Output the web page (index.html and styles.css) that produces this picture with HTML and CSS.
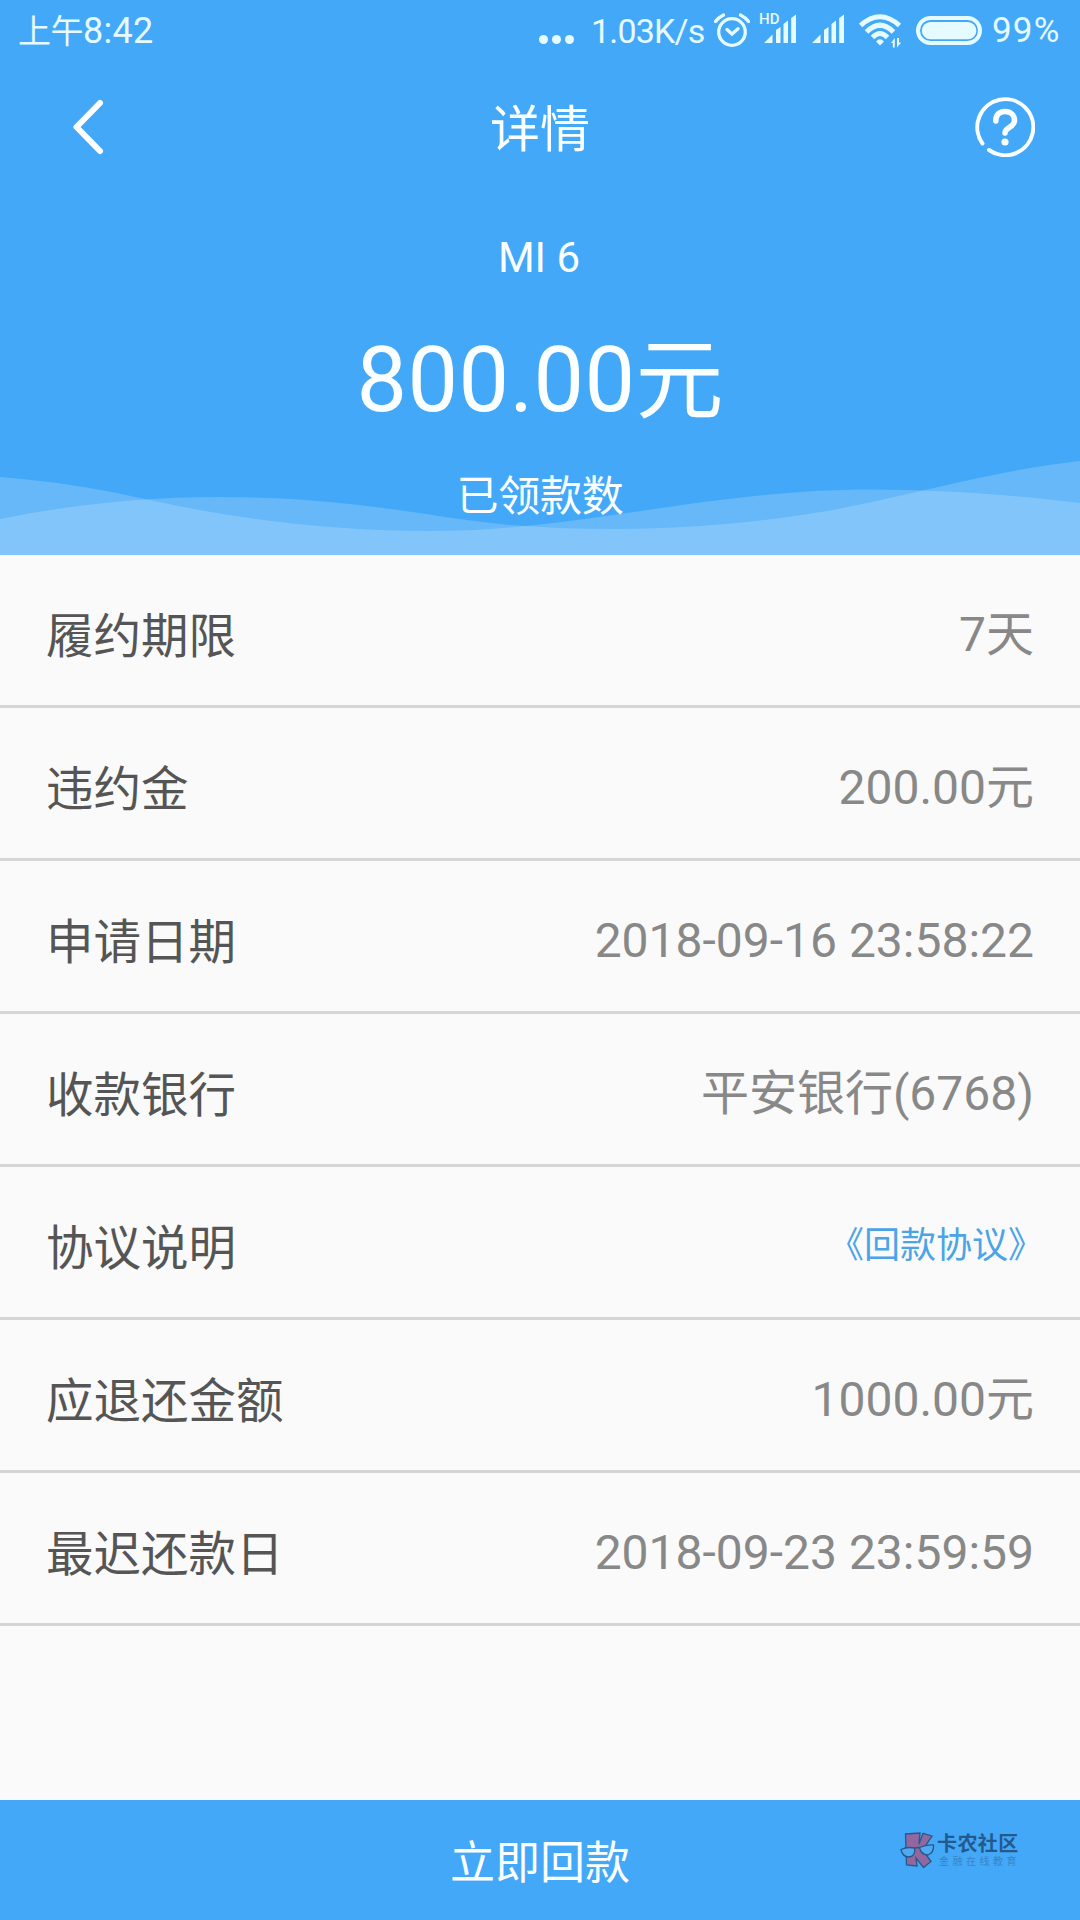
FILE: index.html
```html
<!DOCTYPE html>
<html lang="zh-CN">
<head>
<meta charset="utf-8">
<title>详情</title>
<link rel="stylesheet" href="styles.css">
</head>
<body>
<div class="screen">
  <header class="hero">
    <svg class="waves" width="1080" height="105" viewBox="0 450 1080 105">
      <path d="M0 477C60 482 100 489 145 499C235 519 330 531 430 531C580 531 710 489.500 870 489.500C950 489.500 1020 496 1080 503V555H0Z"/>
      <path d="M0 519C70 505 140 497 220 497C350 497 430 517 500 524C540 528 580 529 619 529C700 529 790 519 850 506.500C930 490 1000 470 1080 461V555H0Z"/>
    </svg>

    <div class="status">
      <div class="clock"><span class="clock-cn">上午</span>8:42</div>
      <div class="indicators">
        <svg class="dots" width="30" height="60" viewBox="539 0 30 60"><circle cx="543.500" cy="39.500" r="4.500"/><circle cx="556.500" cy="39.500" r="4.500"/><circle cx="569.500" cy="39.500" r="4.500"/></svg>
        <span class="speed">1.03K/s</span>
        <svg class="alarm" width="36" height="60" viewBox="714 0 36 60">
          <circle cx="732" cy="32" r="13.300"/>
          <path d="M727 29.500L732 34L738 28.700M715.500 21.500Q718.500 17.500 723.500 15M740.500 15Q745.500 17.500 748.500 21.500"/>
        </svg>
        <div class="sim">
          <span class="hd">HD</span>
          <svg class="bars" width="32" height="60" viewBox="764 0 32 60"><path d="M764 43L772.500 34.500V43ZM776 43V30L780.500 27V43ZM783.500 43V24L788 20.500V43ZM791.200 43V18L796 14.500V43Z"/></svg>
        </div>
        <svg class="bars second" width="32" height="60" viewBox="764 0 32 60"><path d="M764 43L772.500 34.500V43ZM776 43V30L780.500 27V43ZM783.500 43V24L788 20.500V43ZM791.200 43V18L796 14.500V43Z"/></svg>
        <svg class="wifi" width="44" height="60" viewBox="859 0 44 60">
          <path class="arc" d="M860.500 25.500Q880 8 899.500 25.500M866.500 32Q880 18.500 893.500 32M872.500 37.500Q880 29.500 887.500 37.500"/>
          <path d="M876 41.500Q880 37 884 41.500L880 45.500ZM891 43L894.800 38V47.500H892.800V43ZM897 38H899V42.500H901.200L897 47.500Z"/>
        </svg>
        <svg class="battery" width="66" height="60" viewBox="916 0 66 60"><rect class="shell" x="918" y="18" width="62" height="25" rx="12.500"/><rect x="921.800" y="22" width="54.600" height="17.300" rx="8.600"/></svg>
        <span class="percent">99%</span>
      </div>
    </div>

    <nav class="nav">
      <svg class="back" width="40" height="60" viewBox="70 98 40 60"><path d="M101 104L77.500 128L101 152"/></svg>
      <h1 class="title">详情</h1>
      <svg class="help" width="60" height="60" viewBox="975 97 60 60">
        <path class="ring" d="M982.500 143.500A28 28 0 1 1 989 150"/>
        <path class="mark" d="M995.800 121C995.800 114.500 999.500 111.500 1005 111.500C1010.500 111.500 1014.500 115 1014.500 120.500C1014.500 127.500 1005 127 1005 133"/>
        <circle cx="1005" cy="142" r="3.600"/>
      </svg>
    </nav>

    <div class="summary">
      <div class="device">MI 6</div>
      <div class="amount">800.00<span class="unit">元</span></div>
      <div class="caption">已领款数</div>
    </div>
  </header>

  <main class="list">
    <div class="row"><span class="label">履约期限</span><span class="value">7天</span></div>
    <div class="row"><span class="label">违约金</span><span class="value">200.00元</span></div>
    <div class="row"><span class="label">申请日期</span><span class="value">2018-09-16 23:58:22</span></div>
    <div class="row"><span class="label">收款银行</span><span class="value">平安银行(6768)</span></div>
    <div class="row"><span class="label">协议说明</span><a class="link">《回款协议》</a></div>
    <div class="row"><span class="label">应退还金额</span><span class="value">1000.00元</span></div>
    <div class="row"><span class="label">最迟还款日</span><span class="value">2018-09-23 23:59:59</span></div>
  </main>

  <footer class="action">
    <span class="action-text">立即回款</span>
    <div class="watermark">
      <svg width="35" height="37" viewBox="900 1832 35 37">
        <path class="k" d="M905.500 1834L920 1833L919 1844L923 1833.300L932 1836L922.700 1850L931 1861.500L923.500 1867.500L916 1858L917 1866L906.500 1865Z"/>
        <path class="lens" d="M901 1849.500Q907 1846.500 914.500 1848Q916 1856 909 1857Q902.500 1857 901 1849.500ZM919.500 1847.500Q926 1844.500 933.500 1845Q934 1853 928 1855Q921 1855 919.500 1847.500ZM914.500 1848L919.500 1847.500"/>
      </svg>
      <div class="brand"><span class="brand-name">卡农社区</span><span class="brand-sub">金融在线教育</span></div>
    </div>
  </footer>
</div>
</body>
</html>
```
FILE: styles.css
```css
* { box-sizing: border-box; }
body {
  margin: 0;
  font-family: Roboto, "Noto Sans CJK SC", sans-serif;
  background: #fafafa;
}
svg { display: block; flex: none; }
.screen {
  width: 1080px;
  height: 1920px;
  display: flex;
  flex-direction: column;
  background: #fafafa;
  overflow: hidden;
}

.hero {
  position: relative;
  height: 555px;
  flex: none;
  background: #43a8f8;
  color: #fbffff;
}
.waves {
  position: absolute;
  left: 0;
  bottom: 0;
  fill: #fff;
  fill-opacity: .19;
}

.status {
  position: relative;
  height: 60px;
  display: flex;
  justify-content: space-between;
  padding: 0 18px;
  color: #e6fbff;
  fill: #e6fbff;
  line-height: 62px;
  white-space: nowrap;
}
.clock { font-size: 36px; letter-spacing: .3px; }
.clock-cn { font-size: 33px; letter-spacing: -.5px; }
.indicators { display: flex; font-size: 34px; }
.dots { overflow: visible; margin-right: 22px; }
.speed { width: 115px; letter-spacing: -.8px; margin-right: 8px; }
.alarm { fill: none; stroke: #e6fbff; stroke-width: 3.300; stroke-linecap: round; }
.sim { position: relative; margin-left: 14px; }
.hd {
  position: absolute;
  left: -5px;
  top: 9px;
  font-size: 15px;
  line-height: 20px;
  font-weight: 500;
}
.second { margin-left: 16px; }
.wifi { margin-left: 15px; }
.arc { fill: none; stroke: #e6fbff; stroke-width: 5; }
.battery { margin-left: 13px; }
.shell { fill: none; stroke: #e6fbff; stroke-width: 4; }
.percent { margin-left: 10px; width: 70px; font-size: 35px; letter-spacing: 1.200px; }

.nav {
  height: 135px;
  display: flex;
  align-items: center;
  justify-content: space-between;
  padding: 0 45px 2px 69px;
}
.back { fill: none; stroke: #fff; stroke-width: 6; stroke-linecap: round; stroke-linejoin: round; }
.title { margin: 0 4px 0 0; font-size: 50px; font-weight: 400; line-height: 60px; padding-top: 7px; }
.help { fill: #fbffff; }
.ring, .mark { fill: none; stroke: #fbffff; stroke-linecap: round; }
.ring { stroke-width: 4; }
.mark { stroke-width: 5.500; }

.summary {
  position: relative;
  display: flex;
  flex-direction: column;
  align-items: center;
}
.device { font-size: 42px; line-height: 50px; margin-top: 38px; padding-right: 2px; }
.amount { font-size: 90px; line-height: 106px; margin-top: 45px; letter-spacing: .4px; }
.unit { font-size: 88px; letter-spacing: 0; }
.caption { font-size: 42px; line-height: 50px; margin-top: 38px; letter-spacing: -.3px; }

.row {
  height: 153px;
  padding: 10px 46px 0;
  border-bottom: 3px solid #d5d5d5;
  display: flex;
  align-items: center;
  justify-content: space-between;
  font-size: 48px;
  line-height: 60px;
}
.label { color: #555; font-size: 47.500px; padding-top: 4px; }
.value { color: #888; }
.link { color: #4ba4e8; font-size: 36px; margin: 0 -10px 3px 0; }

.action {
  position: relative;
  height: 120px;
  flex: none;
  margin-top: auto;
  display: flex;
  align-items: center;
  justify-content: center;
  padding-top: 7px;
  background: #43a8f8;
  color: #fbffff;
  font-size: 45px;
  line-height: 60px;
}
.watermark {
  position: absolute;
  left: 900px;
  top: 32px;
  display: flex;
}
.k { fill: #92669f; stroke: #24598a; stroke-width: 1.300; }
.lens { fill: #50aaf0; stroke: #24598a; stroke-width: 1.300; }
.brand { display: flex; flex-direction: column; margin: 1px 0 0 2px; white-space: nowrap; }
.brand-name { font-size: 20px; line-height: 22px; font-weight: 700; color: #23598c; letter-spacing: .4px; }
.brand-sub { font-size: 10px; line-height: 13px; color: #3984c4; letter-spacing: 3.500px; margin-left: 2px; }
```
